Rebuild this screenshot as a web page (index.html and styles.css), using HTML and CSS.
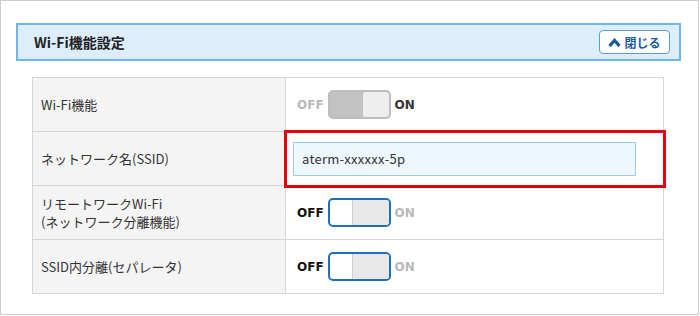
FILE: index.html
```html
<!DOCTYPE html>
<html lang="ja">
<head>
    <meta charset="UTF-8">
    <title>Wi-Fi機能設定</title>
    <link rel="stylesheet" href="styles.css">
</head>
<body>
    <div class="panel">
        <div class="panel-head">
            <h2 class="panel-title">Wi-Fi機能設定</h2>
            <button type="button" class="close-btn">
                <svg width="13" height="9" viewBox="0 0 13 9"><polyline points="1.5,8 6.5,2.5 11.5,8" fill="none" stroke="#1a5a9c" stroke-width="3.2"/></svg>
                閉じる
            </button>
        </div>

        <table class="setting-table">
            <tr>
                <th>Wi-Fi機能</th>
                <td>
                    <span class="sw-text dim">OFF</span>
                    <span class="switch disabled is-on"><span class="knob"></span></span>
                    <span class="sw-text">ON</span>
                </td>
            </tr>
            <tr>
                <th>ネットワーク名(SSID)</th>
                <td class="highlight">
                    <input type="text" class="ssid-input" value="aterm-xxxxxx-5p">
                </td>
            </tr>
            <tr>
                <th>リモートワークWi-Fi<br>(ネットワーク分離機能)</th>
                <td>
                    <span class="sw-text strong">OFF</span>
                    <span class="switch is-off"><span class="knob"></span></span>
                    <span class="sw-text dim">ON</span>
                </td>
            </tr>
            <tr>
                <th>SSID内分離(セパレータ)</th>
                <td>
                    <span class="sw-text strong">OFF</span>
                    <span class="switch is-off"><span class="knob"></span></span>
                    <span class="sw-text dim">ON</span>
                </td>
            </tr>
        </table>
    </div>
</body>
</html>
```

FILE: styles.css
```css
/* settings panel */
body {
    margin: 0;
    font-family: "Noto Sans CJK JP", "Liberation Sans", sans-serif;
    color: #333;
    background: #fff;
}

.panel {
    width: 699px;
    height: 315px;
    box-sizing: border-box;
    border: 1px solid #cccccc;
    padding: 22px 17px 0 15px;
}

.panel-head {
    height: 38px;
    box-sizing: border-box;
    border: 2px solid #6db4f1;
    background: #dcedfc;
    display: flex;
    align-items: center;
    justify-content: space-between;
    padding: 0 9px 0 16px;
}

.panel-title {
    margin: 0;
    font-size: 14px;
    font-weight: bold;
    color: #222;
}

.close-btn {
    width: 71px;
    height: 24px;
    box-sizing: border-box;
    border: 1px solid #5b9bd8;
    border-radius: 4px;
    background: #fff;
    color: #1a5a9c;
    font-family: inherit;
    font-size: 12px;
    font-weight: bold;
    display: flex;
    align-items: center;
    justify-content: center;
    gap: 3px;
    padding: 0;
}

.setting-table {
    width: 632px;
    margin: 16px 0 0 16px;
    border-collapse: collapse;
    border: 1px solid #d6d6d6;
    font-size: 13px;
}

.setting-table th,
.setting-table td {
    height: 53px;
    border: 1px solid #d6d6d6;
    padding: 0;
}

.setting-table th {
    width: 244px;
    background: #f4f4f4;
    text-align: left;
    font-weight: normal;
    padding-left: 8px;
    line-height: 18px;
    color: #333;
}

.setting-table td {
    padding-left: 11px;
    background: #fff;
}

.setting-table td.highlight {
    padding-left: 7px;
    outline: 3px solid #e8000d;
    outline-offset: -1px;
}

.ssid-input {
    width: 343px;
    height: 34px;
    box-sizing: border-box;
    border: 1px solid #9ccaef;
    background: #eef6fe;
    padding: 0 8px;
    font-family: inherit;
    font-size: 13px;
    letter-spacing: 0.3px;
    color: #333;
    display: block;
}

/* toggle switch */
.sw-text {
    font-family: "DejaVu Sans", sans-serif;
    font-size: 12px;
    font-weight: bold;
    color: #333;
    vertical-align: middle;
}

.sw-text.dim {
    color: #b8b8b8;
}

.sw-text.strong {
    color: #111;
}

.switch {
    display: inline-flex;
    width: 63px;
    height: 29px;
    box-sizing: border-box;
    border-radius: 5px;
    vertical-align: middle;
    margin: 0 1px;
    overflow: hidden;
}

.switch.disabled {
    border: 2px solid #bdbdbd;
    background: #c2c2c2;
}

.switch.is-on {
    justify-content: flex-end;
}

.switch.disabled .knob {
    width: 26px;
    height: 100%;
    background: #eeeeee;
    border-radius: 3px;
}

.switch.is-off {
    border: 2px solid #1f6fc1;
    background: #fff;
    justify-content: flex-end;
}

.switch.is-off .knob {
    width: 36px;
    height: 100%;
    background: #e8e8e8;
    border-left: 1px solid #cfcfcf;
}
```
